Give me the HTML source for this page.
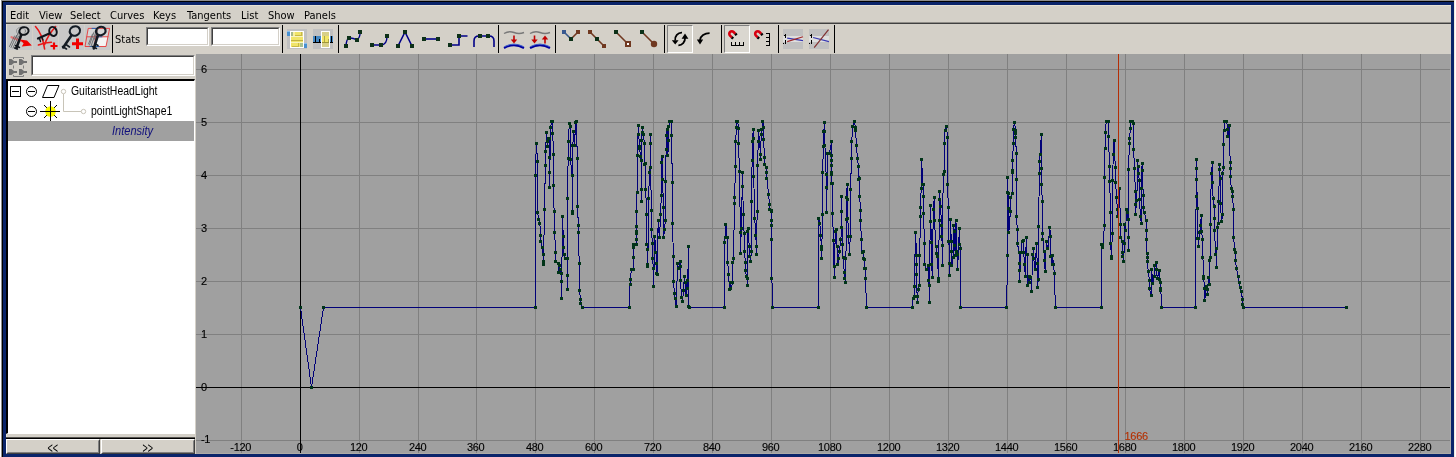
<!DOCTYPE html>
<html lang="en">
<head>
<meta charset="utf-8">
<title>Graph Editor</title>
<style>
html,body{margin:0;padding:0}
body{width:1456px;height:457px;overflow:hidden;position:relative;background:#fff;
 font-family:"DejaVu Sans Condensed","DejaVu Sans","Liberation Sans",sans-serif;font-size:11px;color:#000}
div,span,svg{position:absolute;display:block}
#root{left:0;top:0;width:1456px;height:457px;will-change:transform}
#f1{left:1px;top:0;width:1453px;height:457px;background:#8e8e8e}
#f2{left:2px;top:1px;width:1452px;height:456px;background:#000}
#f3{left:3px;top:2px;width:1451px;height:455px;background:#0a246a}
#f4{left:6px;top:5px;width:1445px;height:449px;background:#e6e1d4}
#f5{left:7px;top:6px;width:1444px;height:448px;background:#d4d0c8}
#ge{left:196px;top:54px;width:1255px;height:400px;background:#aeaba6}
#fr{left:1454px;top:0;width:1px;height:457px;background:#f0ece0}
/* menu */
.menu span{top:9px;height:14px;line-height:14px;white-space:nowrap;font-size:11px}
#msep{left:6px;top:23px;width:1445px;height:1px;background:#404040}
#msep2{left:6px;top:22px;width:1445px;height:1px;background:#908d88}
/* toolbar */
.vsep{top:25px;width:1px;height:28px;background:#000}
.edit{background:#fff;box-sizing:border-box;border:1px solid;border-color:#808080 #fff #fff #808080}
.edit:before{content:"";position:absolute;left:0;top:0;right:0;bottom:0;border:1px solid;border-color:#404040 #d4d0c8 #d4d0c8 #404040}
.pressed{background:#dad7d0;box-sizing:border-box;border:1px solid;border-color:#808080 #fff #fff #808080}
#stats{left:115px;top:33px;height:14px;line-height:14px;font-size:11px}
#tb{left:0;top:24px}
/* outliner */
#tree{left:6px;top:79px;width:189px;height:355px;background:#fff;box-sizing:border-box;border:solid;border-width:2px 1px 1px 2px;border-color:#000 #fff #fff #000}
.row{left:0;width:186px;height:20px}
.row span{font-family:"Liberation Sans",sans-serif;font-size:12px;line-height:14px;top:3px;white-space:nowrap;transform:scaleX(.87);transform-origin:0 0}
#sel{background:#a0a0a0}
#hl{left:6px;top:437px;width:189px;height:2px;background:#000;border-top:1px solid #55534f;box-sizing:border-box}
.btn{top:439px;height:15px;box-sizing:border-box;border:1px solid;border-color:#fff #404040 #404040 #fff;background:#d4d0c8;
 text-align:center;font-size:11px;line-height:11px}
.btn:before{content:"";position:absolute;left:0;top:0;right:0;bottom:0;border:1px solid;border-color:#d4d0c8 #808080 #808080 #d4d0c8}
.btn b{font-weight:normal;position:relative;display:inline-block;top:-.5px;font-family:"Liberation Sans",sans-serif;font-size:15px;line-height:15px;transform:scaleX(.6)}
/* graph */
.graph{left:196px;top:54px}
.lbl text,.tl{font-family:"Liberation Sans",sans-serif;font-size:11px;fill:#000;stroke:#000;stroke-width:.12px}
.tl{fill:#b43000;stroke:#b43000;letter-spacing:-.3px}
.lbl text{letter-spacing:-.3px}
.crv{fill:none;stroke:#000078;stroke-width:1;shape-rendering:crispEdges}
.mk{fill:#003418;shape-rendering:crispEdges}
</style>
</head>
<body>
<div id="root">
<div id="f1"></div><div id="f2"></div><div id="f3"></div><div id="fr"></div><div id="f4"></div><div id="f5"></div><div id="ge"></div>

<div class="menu">
<span style="left:10px">Edit</span>
<span style="left:39px">View</span>
<span style="left:70px">Select</span>
<span style="left:110px">Curves</span>
<span style="left:153px">Keys</span>
<span style="left:187px">Tangents</span>
<span style="left:241px">List</span>
<span style="left:268px">Show</span>
<span style="left:304px">Panels</span>
</div>
<div id="msep2"></div><div id="msep"></div>

<!-- toolbar -->
<div class="vsep" style="left:112px"></div>
<span id="stats">Stats</span>
<div class="edit" style="left:146px;top:27px;width:63px;height:19px"></div>
<div class="edit" style="left:211px;top:27px;width:69px;height:19px"></div>
<div class="vsep" style="left:282px"></div>
<div class="vsep" style="left:338px"></div>
<div class="vsep" style="left:498px"></div>
<div class="vsep" style="left:555px"></div>
<div class="vsep" style="left:664px"></div>
<div class="pressed" style="left:667px;top:25px;width:26px;height:28px"></div>
<div class="vsep" style="left:721px"></div>
<div class="pressed" style="left:724px;top:25px;width:26px;height:28px"></div>
<div class="vsep" style="left:778px"></div>
<div class="vsep" style="left:834px"></div>
<svg id="tb" width="1456" height="30" viewBox="0 24 1456 30">
<!-- key icon backgrounds -->
<g shape-rendering="crispEdges" fill="#c8c8c8">
 <rect x="7" y="25" width="25" height="25"/><rect x="33" y="25" width="25" height="25"/>
 <rect x="59" y="25" width="25" height="25"/><rect x="85" y="25" width="25" height="25"/>
</g>
<!-- icon 1: move key -->
<g fill="none" stroke-linecap="round">
 <path d="M11.5 37.2L21 41" stroke="#f06060" stroke-width="2.2" opacity=".8"/>
 <g stroke="#505458" stroke-width="1">
  <path d="M18.5 36L13 48M16.5 35.5L11 47.500M14.500 36L9.500 46.500M20 29L16 38" opacity=".75"/>
  <ellipse cx="21" cy="31" rx="4.500" ry="3.800" opacity=".45"/>
 </g>
 <ellipse cx="24" cy="31" rx="4.600" ry="3.800" transform="rotate(-15 24 31)" stroke="#10141a" stroke-width="2"/>
 <path d="M21.300 34.800L16.400 48" stroke="#10141a" stroke-width="2.600"/>
 <path d="M15.500 45.500L19.500 47.500M14.500 48L17.500 49" stroke="#10141a" stroke-width="1.400"/>
 <path d="M19.800 39.600L27 40.400L31.800 45.600L21.800 46.400L23.600 43.400z" fill="#f00000" stroke="none"/>
</g>
<!-- icon 2: insert key -->
<g fill="none" stroke-linecap="round">
 <path d="M35.5 26.5Q42.5 34 44.6 49" stroke="#e81818" stroke-width="1.6"/>
 <path d="M55.6 26.6Q47.5 36 44.6 44.5" stroke="#e81818" stroke-width="1.6"/>
 <path d="M38.4 45Q45 42.4 51.4 42.2" stroke="#e81818" stroke-width="1.6"/>
 <ellipse cx="53" cy="31.4" rx="3.6" ry="4.6" transform="rotate(-20 53 31.4)" stroke="#10141a" stroke-width="2"/>
 <path d="M49.3 33.4L38 38.6" stroke="#10141a" stroke-width="2.2"/>
 <path d="M39.5 38.5L40.5 41.5M42 37.5L43 40" stroke="#10141a" stroke-width="1.4"/>
 <path d="M50.5 46H57.5M54 42.5V49.5" stroke="#f00000" stroke-width="2.2" stroke-linecap="butt"/>
</g>
<!-- icon 3: add key -->
<g fill="none" stroke-linecap="round">
 <ellipse cx="74.9" cy="31" rx="5.2" ry="4.6" transform="rotate(-25 74.9 31)" stroke="#141c24" stroke-width="2.2"/>
 <path d="M71.4 35.4L63.2 47.4" stroke="#141c24" stroke-width="2.6"/>
 <path d="M62.5 46.5L66.5 49M66 44.5L69.5 47" stroke="#141c24" stroke-width="1.6"/>
 <path d="M72 43.7H83M77.5 38.5V49" stroke="#f00000" stroke-width="3" stroke-linecap="butt"/>
</g>
<!-- icon 4: lattice deform keys -->
<g fill="none" stroke-linecap="round">
 <path d="M88.6 28.4H109.6L107.9 36.8H87z" fill="#d6d6d6" stroke="none"/>
 <path d="M95.9 36.8H107.9L106 46.5H94.2z" fill="#f4f4f4" stroke="none"/>
 <path d="M88.6 28.4H109.6L106 46.5H85.4zM87 36.8H107.9M97.4 28.4L94.2 46.5" stroke="#e83838" stroke-width=".9"/>
 <path d="M90 46.5H99M92 28.4H98M96 36.8H102" stroke="#2868b8" stroke-width="1"/>
 <g stroke="#5c6064" stroke-width="1" opacity=".8"><path d="M96 31L91 46.500M94 32L89.500 45M98 29L94 40M92.500 34L88.500 44"/></g>
 <ellipse cx="100.8" cy="31" rx="4.8" ry="4.2" transform="rotate(-15 100.8 31)" stroke="#141c24" stroke-width="2.2"/>
 <path d="M98 35L93.8 48.4" stroke="#141c24" stroke-width="2.6"/>
 <path d="M92.5 46.5L96.5 48.5M95.5 44L98 45.5" stroke="#141c24" stroke-width="1.5"/>
</g>
<!-- icon A -->
<g shape-rendering="crispEdges">
 <rect x="287" y="29" width="20" height="20" fill="#c0c0c0"/>
 <rect x="290" y="31" width="14" height="17" fill="#fff"/>
 <rect x="291" y="32" width="12" height="15" fill="#f0e468"/>
 <rect x="291" y="32" width="2" height="4" fill="#a8b888"/>
 <rect x="293" y="32" width="2" height="4" fill="#f8f0a0"/>
 <rect x="295" y="35" width="7" height="1" fill="#c8b848"/><rect x="301" y="32" width="1" height="4" fill="#c8b848"/>
 <rect x="302" y="32" width="1" height="4" fill="#e0d888"/>
 <rect x="291" y="36" width="12" height="1" fill="#f8f4c0"/>
 <rect x="291" y="40" width="12" height="1" fill="#c0b040"/>
 <rect x="291" y="42" width="12" height="1" fill="#f8f4c0"/>
 <rect x="292" y="46" width="7" height="1" fill="#c8b848"/><rect x="298" y="43" width="1" height="4" fill="#c8b848"/>
 <rect x="300" y="43" width="3" height="4" fill="#a8c090"/>
 <rect x="287" y="31" width="3" height="5" fill="#4890d0"/><rect x="287" y="31" width="3" height="1" fill="#88c0f0"/>
 <rect x="304" y="43" width="3" height="5" fill="#4890d0"/><rect x="304" y="43" width="3" height="1" fill="#88c0f0"/>
</g>
<!-- icon B -->
<g shape-rendering="crispEdges">
 <rect x="313" y="29" width="20" height="20" fill="#c0c0c0"/>
 <rect x="313" y="36" width="20" height="6" fill="#4488c4"/>
 <rect x="313" y="42" width="20" height="1" fill="#000"/>
 <rect x="315" y="36" width="1" height="6" fill="#000"/><rect x="319" y="39" width="1" height="3" fill="#000"/>
 <rect x="331" y="36" width="1" height="6" fill="#000"/>
 <rect x="321" y="31" width="9" height="17" fill="#fff"/>
 <rect x="322" y="32" width="7" height="15" fill="#d8d088"/>
 <rect x="322" y="36" width="7" height="6" fill="#f0e468"/>
 <rect x="322" y="42" width="7" height="1" fill="#a09838"/>
 <rect x="324" y="36" width="1" height="6" fill="#b0a848"/><rect x="328" y="39" width="1" height="3" fill="#b0a848"/>
</g>
<!-- tangent icons -->
<g fill="none" stroke="#000088" stroke-width="1.4">
 <path d="M346 46Q346.5 39 349 38.2T357 39.8Q360 38 360.2 32"/>
 <path d="M372 45H381Q387 45 387 36"/>
 <path d="M398 46L405 32L412 46" stroke-width="1.6"/>
 <path d="M424 39H438" stroke-width="1.6"/>
 <path d="M450 45H459V36H467.5" stroke-width="1.6"/>
 <path d="M474 47V41Q474 36 479 36H489Q494 36 494 41V47" stroke-width="1.6"/>
</g>
<g fill="#0c3018" shape-rendering="crispEdges"><rect x="344" y="44" width="4" height="4"/><rect x="347" y="36" width="4" height="4"/><rect x="355" y="38" width="4" height="4"/><rect x="358" y="30" width="4" height="4"/></g>
<g fill="#0c3018" shape-rendering="crispEdges"><rect x="370" y="43" width="4" height="4"/><rect x="379" y="43" width="4" height="4"/><rect x="385" y="34" width="4" height="4"/></g>
<g fill="#0c3018" shape-rendering="crispEdges"><rect x="396" y="44" width="4" height="4"/><rect x="403" y="30" width="4" height="4"/><rect x="410" y="44" width="4" height="4"/></g>
<g fill="#0c3018" shape-rendering="crispEdges"><rect x="422" y="37" width="4" height="4"/><rect x="436" y="37" width="4" height="4"/></g>
<g fill="#0c3018" shape-rendering="crispEdges"><rect x="448" y="43" width="4" height="4"/><rect x="457" y="34" width="4" height="4"/></g>
<g fill="#0c3018" shape-rendering="crispEdges"><rect x="478" y="34" width="4" height="4"/><rect x="486" y="34" width="4" height="4"/></g>
<!-- buffer curve icons -->
<g fill="none">
 <path d="M504 33.5Q509 30.5 514 32.5T524 32.5" stroke="#787878" stroke-width="1.4"/>
 <path d="M504 48Q514 42.5 524 48" stroke="#0000a0" stroke-width="2"/>
 <path d="M504.5 46.6Q514 41.6 523.5 46.6" stroke="#3858c8" stroke-width="1"/>
 <path d="M514 35.5V41" stroke="#c00000" stroke-width="1.6"/><path d="M510.8 39.5H517.2L514 43.6z" fill="#c00000"/>
 <path d="M530 33.5Q535 30.5 540 32.5T550 32.5" stroke="#787878" stroke-width="1.4"/>
 <path d="M530 48Q540 42.5 550 48" stroke="#0000a0" stroke-width="2"/>
 <path d="M530.5 46.6Q540 41.6 549.5 46.6" stroke="#3858c8" stroke-width="1"/>
 <path d="M534.5 35.5V41" stroke="#c00000" stroke-width="1.6"/><path d="M531.3 39.5H537.7L534.5 43.6z" fill="#c00000"/>
 <path d="M545 38V43.6" stroke="#c00000" stroke-width="1.6"/><path d="M541.8 39.6H548.2L545 35.4z" fill="#c00000"/>
</g>
<!-- tangent handle icons -->
<g fill="none" stroke-width="1.6">
 <path d="M564 32L571 39" stroke="#385888"/><path d="M571 39L578 32" stroke="#703820"/>
 <path d="M590 32L604 46" stroke="#703820"/>
 <path d="M616 32L627 43" stroke="#703820"/>
 <path d="M642 32L653 43" stroke="#703820"/>
</g>
<g shape-rendering="crispEdges">
 <rect x="562" y="30" width="4" height="4" fill="#385890"/><rect x="576" y="30" width="4" height="4" fill="#703820"/>
 <rect x="588" y="30" width="4" height="4" fill="#703820"/><rect x="602" y="44" width="4" height="4" fill="#703820"/>
 <rect x="625" y="41" width="6" height="6" fill="#703820"/><rect x="627" y="43" width="2" height="2" fill="#fff"/>
</g>
<circle cx="654" cy="44" r="3.2" fill="#703820"/>
<g fill="#0c3018" shape-rendering="crispEdges"><rect x="569" y="37" width="4" height="4"/><rect x="595" y="37" width="4" height="4"/><rect x="614" y="30" width="4" height="4"/><rect x="640" y="30" width="4" height="4"/></g>
<!-- cycle icons -->
<g fill="none" stroke="#000" stroke-width="1.8">
 <path d="M682 32.7A6.6 6.8 0 0 0 675.2 40.5"/>
 <path d="M678.4 45.3A6.6 6.8 0 0 0 685 38"/>
 <path d="M709.6 33.1A9.6 7.5 0 0 0 700 40"/>
</g>
<path d="M671.8 40.2H678.6L675.2 44.6zM681.6 38.8H688.4L685 33.6zM696.8 39.4H703.2L700 44.4z" fill="#000"/>
<!-- magnet icons -->
<g fill="none" stroke-width="2.6" transform="translate(731.8 33.8) rotate(45)">
 <path d="M2.6 -2.5H0A2.5 2.5 0 0 0 0 2.5H2.6" stroke="#d80010"/><path d="M2.4 -2.5H4.4M2.4 2.5H4.4" stroke="#000"/>
</g>
<g fill="none" stroke-width="2.6" transform="translate(757.7 33.8) rotate(45)">
 <path d="M2.6 -2.5H0A2.5 2.5 0 0 0 0 2.5H2.6" stroke="#d80010"/><path d="M2.4 -2.5H4.4M2.4 2.5H4.4" stroke="#000"/>
</g>
<g shape-rendering="crispEdges" fill="#000">
 <rect x="731" y="45" width="13" height="1"/><rect x="731" y="42" width="1" height="3"/><rect x="735" y="42" width="1" height="3"/><rect x="739" y="42" width="1" height="3"/><rect x="743" y="42" width="1" height="3"/>
 <rect x="769" y="33" width="1" height="13"/><rect x="766" y="33" width="3" height="1"/><rect x="766" y="37" width="3" height="1"/><rect x="766" y="41" width="3" height="1"/><rect x="766" y="45" width="3" height="1"/>
</g>
<!-- normalize icons -->
<g shape-rendering="crispEdges">
 <rect x="783" y="29" width="20" height="20" fill="#c0c0c0"/><rect x="783" y="36" width="20" height="6" fill="#dedede"/>
 <rect x="809" y="29" width="20" height="20" fill="#c0c0c0"/><rect x="809" y="36" width="20" height="6" fill="#dedede"/>
 <rect x="785" y="34" width="1" height="4" fill="#000"/><rect x="784" y="35" width="1" height="1" fill="#000"/>
 <rect x="785" y="40" width="1" height="4" fill="#000"/><rect x="783" y="43" width="1" height="1" fill="#000"/>
 <rect x="811" y="34" width="1" height="4" fill="#000"/><rect x="810" y="35" width="1" height="1" fill="#000"/>
 <rect x="811" y="40" width="1" height="4" fill="#000"/><rect x="809" y="43" width="1" height="1" fill="#000"/>
</g>
<g fill="none" stroke-width="1.2">
 <path d="M787.2 38.2L803 40.6" stroke="#3838b0"/><path d="M787.2 41.6L803 36.7" stroke="#a02828"/>
 <path d="M813.1 37.5L829 41.6" stroke="#3838b0"/><path d="M814.2 47.6L828.5 29.7" stroke="#803030"/>
</g>
</svg>


<!-- outliner -->
<div class="edit" style="left:31px;top:55px;width:164px;height:21px"></div>
<div id="tree">
 <div class="row" style="top:0"><span style="left:63px">GuitaristHeadLight</span></div>
 <div class="row" style="top:20px"><span style="left:83px">pointLightShape1</span></div>
 <div class="row" id="sel" style="top:40px"><span style="left:104px;font-style:italic;color:#10107c;transform:scaleX(.92)">Intensity</span></div>
</div>
<svg id="li" width="190" height="70" viewBox="6 54 190 70" style="left:6px;top:54px">
<!-- filter icon -->
<g fill="#707070">
 <path d="M9 59h2.5l2.5 2h3v2h-3l-2.5 2H9z"/><path d="M19 59h2.5l2.5 2h3v2h-3l-2.5 2H19z"/>
 <path d="M9 69h2.5l2.5 2h3v2h-3l-2.5 2H9z"/><path d="M19 69h2.5l2.5 2h3v2h-3l-2.5 2H19z"/>
</g>
<path d="M13.5 59V57.5H23.5V59M13.5 75V76.500H23.5V75M13.500 65.500V68.500M23.500 65.500V68.500" fill="none" stroke="#808080" stroke-width="1"/>
<!-- tree icons -->
<g fill="none" stroke="#000" stroke-width="1">
 <rect x="10.500" y="86.500" width="10" height="10"/><path d="M12 91.500H19"/>
 <circle cx="31.500" cy="91.500" r="5"/><path d="M28 91.500H35"/>
 <path d="M42.500 97.500L54 97.500L59 85.500L47.500 85.500z"/>
 <circle cx="31.500" cy="111.500" r="5"/><path d="M28 111.500H35"/>
</g>
<g fill="none" stroke="#c8c4b8" stroke-width="1">
 <circle cx="63.500" cy="91.500" r="2.200" fill="#fff"/><path d="M63.500 94V111.500H81"/><circle cx="83.500" cy="111.500" r="2.200" fill="#fff"/>
</g>
<path d="M44 105L57 118M57 105L44 118" stroke="#000" stroke-width="1" fill="none"/>
<circle cx="50.500" cy="111.500" r="5.3" fill="#f8f800"/>
<path d="M50.500 101V121M40 111.500H60" stroke="#000" stroke-width="1" fill="none" shape-rendering="crispEdges"/>
</svg>

<div id="hl"></div>
<div class="btn" style="left:6px;width:94px"><b>&lt;&lt;</b></div>
<div class="btn" style="left:101px;width:94px"><b>&gt;&gt;</b></div>

<svg class="graph" width="1254" height="399" viewBox="196 54 1254 399">
<rect x="196" y="54" width="1254" height="399" fill="#a0a0a0"/>
<rect x="241" y="54" width="1" height="399" fill="#808080"/>
<rect x="359" y="54" width="1" height="399" fill="#808080"/>
<rect x="418" y="54" width="1" height="399" fill="#808080"/>
<rect x="476" y="54" width="1" height="399" fill="#808080"/>
<rect x="535" y="54" width="1" height="399" fill="#808080"/>
<rect x="594" y="54" width="1" height="399" fill="#808080"/>
<rect x="653" y="54" width="1" height="399" fill="#808080"/>
<rect x="712" y="54" width="1" height="399" fill="#808080"/>
<rect x="771" y="54" width="1" height="399" fill="#808080"/>
<rect x="830" y="54" width="1" height="399" fill="#808080"/>
<rect x="889" y="54" width="1" height="399" fill="#808080"/>
<rect x="948" y="54" width="1" height="399" fill="#808080"/>
<rect x="1007" y="54" width="1" height="399" fill="#808080"/>
<rect x="1066" y="54" width="1" height="399" fill="#808080"/>
<rect x="1125" y="54" width="1" height="399" fill="#808080"/>
<rect x="1184" y="54" width="1" height="399" fill="#808080"/>
<rect x="1243" y="54" width="1" height="399" fill="#808080"/>
<rect x="1302" y="54" width="1" height="399" fill="#808080"/>
<rect x="1361" y="54" width="1" height="399" fill="#808080"/>
<rect x="1420" y="54" width="1" height="399" fill="#808080"/>
<rect x="196" y="440" width="1254" height="1" fill="#808080"/>
<rect x="196" y="334" width="1254" height="1" fill="#808080"/>
<rect x="196" y="281" width="1254" height="1" fill="#808080"/>
<rect x="196" y="228" width="1254" height="1" fill="#808080"/>
<rect x="196" y="175" width="1254" height="1" fill="#808080"/>
<rect x="196" y="122" width="1254" height="1" fill="#808080"/>
<rect x="196" y="69" width="1254" height="1" fill="#808080"/>
<rect x="196" y="387" width="1254" height="1" fill="#000"/>
<rect x="300" y="54" width="1" height="399" fill="#000"/>
<g class="lbl">
<text x="201" y="443">-1</text>
<text x="201" y="391">0</text>
<text x="201" y="338">1</text>
<text x="201" y="285">2</text>
<text x="201" y="232">3</text>
<text x="201" y="179">4</text>
<text x="201" y="126">5</text>
<text x="201" y="73">6</text>
<text x="240.7" y="451" text-anchor="middle">-120</text>
<text x="299.7" y="451" text-anchor="middle">0</text>
<text x="358.7" y="451" text-anchor="middle">120</text>
<text x="417.7" y="451" text-anchor="middle">240</text>
<text x="475.7" y="451" text-anchor="middle">360</text>
<text x="534.7" y="451" text-anchor="middle">480</text>
<text x="593.7" y="451" text-anchor="middle">600</text>
<text x="652.7" y="451" text-anchor="middle">720</text>
<text x="711.7" y="451" text-anchor="middle">840</text>
<text x="770.7" y="451" text-anchor="middle">960</text>
<text x="829.7" y="451" text-anchor="middle">1080</text>
<text x="888.7" y="451" text-anchor="middle">1200</text>
<text x="947.7" y="451" text-anchor="middle">1320</text>
<text x="1006.7" y="451" text-anchor="middle">1440</text>
<text x="1065.7" y="451" text-anchor="middle">1560</text>
<text x="1124.7" y="451" text-anchor="middle">1680</text>
<text x="1183.7" y="451" text-anchor="middle">1800</text>
<text x="1242.7" y="451" text-anchor="middle">1920</text>
<text x="1301.7" y="451" text-anchor="middle">2040</text>
<text x="1360.7" y="451" text-anchor="middle">2160</text>
<text x="1419.7" y="451" text-anchor="middle">2280</text>
</g>
<polyline class="crv" points="300.5,307.5 311.5,387.5 323.5,307.5 535.2,307.5 535.2,175.3 536.4,143.2 537.5,161.4 537.5,212.3 538.7,219.1 539.8,223.7 540.9,235.5 540.9,241.9 542.1,247.6 543.2,254.4 543.7,261.2 543.7,264.6 544.3,209.4 545.5,165.5 545.5,151.1 546.6,132.5 547.1,141.6 547.8,146.1 548.4,138.2 549.6,138.2 549.6,157.5 549.6,172.3 549.6,187.1 550.5,127.9 551.6,121.5 552.3,121.5 552.8,133.2 553.4,154.1 553.4,185.3 554.1,211 554.6,232.1 555.7,252.1 555.7,261.2 558,263.5 558,272.6 559.1,265.8 560.3,269.6 561.4,273.7 561.4,281.7 561.4,298.3 562.6,216.8 563.2,236.2 563.2,247.6 563.7,247.6 564.1,254.4 565.5,258.9 567.1,258.9 567.1,275.3 567.1,289.2 567.3,198.5 568.2,158.7 568.2,141.1 569.4,123.4 570.5,126.8 570.5,159.8 572.1,175.3 572.1,211 572.1,213.4 572.8,145 573.9,131.3 574.6,145 575.5,122.2 576.4,121.5 577.3,158.7 577.3,206 578.5,225.5 578.5,232.8 579.2,263.5 579.2,290.1 580.8,299.9 580.8,303.3 582.4,307.5 629.2,307.5 630.1,284 630.1,279.4 631.5,269.6 633.1,269.6 633.1,257.8 633.1,247.6 633.1,244.1 634.2,244.1 636.5,244.1 636.5,239.6 636.5,231.6 636.5,233.9 636.5,226.4 636.5,211.1 636.5,211 637,192.1 637,155.2 638.1,134.8 638.1,125.7 639.5,146.1 639.5,148.4 640.6,156.4 641.5,160.9 641.5,189.4 641.5,201.9 641.5,140.4 642.2,127.5 642.9,132.5 643.3,134.8 644.5,143.9 644.5,164.3 645.6,163.2 645.6,189.4 646.8,214.4 646.8,214.6 646.8,244.1 647.9,249.8 647.9,264.6 647.9,266.9 648.4,198.9 649.7,172.3 650.2,167.8 650.2,143.9 650.2,134.1 651.3,210.3 651.3,229.3 652.4,243 652.4,258.9 653.6,268 653.6,286.2 654.7,236.2 655.9,252.1 656.5,263.5 656.5,273.7 657.5,274.9 658.1,220.2 659.3,237.3 660.9,214.6 660.9,214.4 661.1,195.1 661.5,162.1 662.2,156.4 662.2,179.1 663.8,207.1 663.8,237.3 664.3,229.3 665.6,220.2 665.6,181.4 666.1,149.6 666.1,135.9 667.2,129.1 667.9,155.2 668.4,140.4 668.8,126.8 669.5,121.5 671.1,121.5 671.3,135.9 672.5,182.6 672.5,223.2 673.4,256.7 673.4,281.7 674.5,293.1 675.2,298.8 676.3,306.7 677.5,263.9 678.6,268 680.4,261.7 680.4,266.9 680.4,280.6 681.6,297.6 682.5,301 683.6,290.8 684.3,276 685,282.8 686.1,295.3 687,280.6 687.7,288.5 688.4,246.4 688.4,306.7 689.3,307.5 724.3,307.5 724.3,242.3 725.5,237.3 725.9,224.8 727.1,237.3 727.8,262.8 728.7,274.2 729.3,289.7 730.9,282.8 730.9,288.5 732.8,282.4 732.8,262.8 733.4,258.9 734.6,203 734.6,197.3 735.5,166.2 735.5,141.6 736.6,127.9 736.6,121.5 737.8,121.5 738.4,128.4 738.4,143.9 739.6,171.2 740.3,232.8 740.3,253.2 741.4,228.2 742.5,172.3 742.5,186 743.5,214.1 744.1,233.9 744.6,251.4 745.3,262.3 745.3,270.3 746.4,276 747.6,278.3 747.6,285.1 747.6,231.6 748.7,228.2 749.1,246.9 749.8,256.7 750.5,261.2 751.4,251.4 751.6,201.2 752.1,160.2 752.6,141.6 753.2,129.1 753.7,138.2 753.7,176.9 754.8,218 755.5,235 756.7,246.4 756.7,254.4 757.1,211 757.1,165.5 758.5,141.6 758.5,130.2 760.5,154.1 760.5,159.8 761.2,134.8 761.9,129.1 762.8,121.5 763.5,127.9 763.5,139.3 764.6,157.5 764.6,164.3 766.9,167.8 766.9,172.3 766.9,178 768.5,194.4 769.6,204.2 769.6,209.4 771.4,210.3 771.4,211.1 771.4,220.2 771.4,225.5 771.4,239.1 771.9,278.3 772.6,307.5 818.6,307.5 818.6,218 819.9,223.7 820.4,235 821.5,246.4 821.5,249.8 821.5,258.2 822.7,214.6 822.7,214 822.7,172.3 823.3,146.1 823.8,131.3 824.5,122.9 824.9,131.3 824.9,145 826.1,174.6 826.5,187.1 826.5,212.1 826.5,212.3 827.9,153 829.5,153 831.8,141.1 831.8,155.2 831.8,160.9 831.8,165.5 831.8,172.3 831.8,174.6 831.8,183 832.4,183 832.4,213.3 832.4,213.4 833.6,240.7 834,266.9 834.5,277.1 835.2,231.6 836.3,229.3 837,246.4 837.9,264.6 838.6,258.9 839.3,251 840.9,239.6 841.5,227.1 841.5,196.2 841.5,211 842.5,244.1 843.1,257.8 844.3,272.6 844.3,278.3 845.9,282.4 845.9,258.9 846.5,219.1 846.5,197.3 847.2,184.4 847.7,199.6 847.7,218 848.8,236.2 849.3,254.4 850.4,236.2 850.4,189.4 851.6,158.7 851.6,141.6 852.9,126.8 854.1,121.5 855.7,127.9 855.7,130.2 856.3,145 857.5,158.7 858.4,166.2 858.4,179.1 859.1,178 859.5,196.2 860.7,210.3 860.7,220.9 861.3,239.6 862,252.1 863.6,251.4 863.6,258.9 864.8,259.6 864.8,268 865.4,268.7 865.4,278.3 866.6,307.5 912.1,307.5 913.2,298.8 914.3,296.5 914.3,286.2 915.5,232.3 916.6,255.5 916.6,264.6 916.6,274.2 917.1,296.5 917.1,302.2 918.2,289.7 919.4,285.1 919.6,255.5 920.5,216.8 920.5,207.6 921.2,188.2 921.6,159.3 922.8,184.8 923.4,184.4 923.4,196.2 923.4,213.4 924.6,243.7 924.6,264.6 926.4,269.6 928,265.8 928,280.6 929.1,285.1 929.1,302.2 930.3,221.4 930.3,205.3 931.4,242.3 931.4,264.6 932.6,277.8 933.2,209.4 934.4,197.3 934.4,220.2 936,246.4 936,253.2 937.8,256.7 938.2,278.3 938.2,281 939.4,220.2 939.4,199.2 939.4,191.7 940.5,206.4 941.7,225.5 941.7,236.2 942.3,245.3 942.3,265.1 943.2,174.6 944.4,171.2 944.4,143.4 945.1,130.2 946.7,126.3 947.3,137.5 947.3,184.4 948.5,207.6 948.9,241.9 949.6,263.5 949.6,275.3 950.3,219.1 951.4,241.9 951.9,251 951.9,265.8 953,257.8 953,225.5 954.6,231.6 954.6,245.3 955.3,255.5 956,220.9 956.4,251 957.6,254.4 957.6,269.2 959.4,228.7 959.4,244.1 960.5,248.2 960.5,307.5 1006.5,307.5 1007.7,255.5 1007.7,177.5 1007.7,192.1 1008.8,193.9 1008.8,208.7 1008.8,232.3 1010.4,211.5 1010.4,197.3 1012.7,193.9 1012.7,172.3 1012.7,170 1012.7,160.2 1013.3,143.4 1013.3,129.1 1014.5,122.2 1015.6,130.2 1015.6,133.6 1015.6,137.5 1016.3,153 1016.3,179.4 1016.3,216.8 1017.4,229.3 1017.4,243 1019,252.1 1019,263.5 1019,270.3 1019.5,281.2 1020.9,252.1 1022,241.9 1023.6,240.7 1023.6,252.1 1024.7,264.6 1025.2,276 1026.3,237.3 1027,254.4 1027.7,285.1 1029.3,276 1029.3,282.8 1030.9,277.1 1031.5,291.9 1032.7,254.4 1033.8,248.7 1033.8,258.9 1035,269.6 1036.6,243.7 1037.2,263.5 1037.2,287.4 1038.4,279.4 1038.4,226.4 1039.5,173.4 1039.5,161.6 1040.2,154.1 1041.3,134.3 1041.3,168.9 1041.3,184.4 1042.5,201.9 1042.5,233.2 1042.9,239.1 1044.1,251.4 1044.5,260.5 1045.2,271.9 1046.3,241.9 1047.9,248.7 1049.8,227.1 1050.4,236.2 1050.9,256.7 1052,264.6 1052.5,255.5 1053.6,264.6 1054.3,273.3 1055.4,307.5 1101.2,307.5 1101.2,244.1 1102.8,244.1 1102.8,247.6 1104.4,225.9 1104.6,177.5 1105,148.4 1105.5,132.5 1106.2,121.6 1108.4,121.5 1108.4,136.6 1109.6,166.6 1109.6,181.4 1110.7,212.1 1110.7,243.7 1111.4,256.7 1111.4,258.9 1112.3,233.9 1112.3,180.3 1113.5,154.1 1114.1,140.4 1115.3,167.3 1115.7,182.1 1116.4,197.3 1117.6,209.9 1117.6,216.8 1119.4,188.2 1120.5,224.1 1120.5,237.3 1122.1,241.9 1122.8,252.1 1122.8,256.7 1123.7,261.2 1124.4,243 1124.8,224.1 1125.5,230.5 1126.7,209.9 1127.3,212.3 1128.2,219.1 1128.2,237.3 1128.2,250.5 1128.5,169.4 1129.4,143.9 1129.4,138.2 1130.5,128.4 1130.5,121.6 1132.8,121.6 1133.5,123.4 1133.5,149.6 1134.6,168.4 1135.3,191.7 1135.3,204.2 1135.3,214.6 1136.9,200.3 1137.4,160.2 1138,166.6 1138,173.9 1139.6,180.3 1139.6,199.6 1140.3,216.4 1141.4,223.2 1141.4,188.2 1142.1,163.2 1142.1,170 1143.3,195.1 1143.3,207.6 1144.4,212.3 1146,220.2 1146,230.5 1146,239.1 1147.1,253.2 1147.1,257.8 1147.1,261.9 1148.3,271 1149.4,280.6 1149.4,288.5 1151,295.3 1151.7,269.6 1152.8,283.3 1154,276.5 1154.6,265.8 1156.2,262.8 1156.2,269.6 1157.4,278.3 1159.2,270.3 1159.2,279.4 1160.8,282.4 1160.8,290.1 1160.8,288.5 1161.5,307.5 1195.4,307.5 1196.1,196.2 1196.5,159.8 1196.5,168.4 1196.5,179.1 1197.7,208.7 1197.7,238.4 1198.3,238.4 1198.3,246.4 1199.5,232.8 1200.6,225.9 1201.3,215 1201.3,231.6 1202.9,239.1 1202.9,257.3 1203.6,276.5 1203.6,278.3 1204.7,288.5 1204.7,300.6 1206.3,286.2 1207.4,294.2 1207.4,289.7 1208.6,277.8 1209.7,284 1209.7,260.1 1210.4,257.3 1210.4,224.1 1211.3,173.4 1212.5,162.1 1212.5,182.1 1213.1,198.5 1214.3,206.4 1214.3,218 1214.3,230 1215.9,254.4 1216.5,248.7 1216.5,267.4 1217.7,227.1 1218.1,223.2 1218.8,201.9 1219.3,164.8 1219.3,169.4 1220.4,178.5 1220.4,203.5 1221.6,221.4 1222.7,214.6 1222.7,173.4 1223.4,167.3 1223.4,144.3 1224.1,130.2 1224.5,121.6 1226.8,121.5 1227.5,129.1 1227.9,136.6 1229.1,125.2 1230.2,162.5 1230.2,168.9 1230.2,176.4 1231.3,188.2 1232.5,191.7 1232.5,196.7 1233.6,209.4 1233.6,237.3 1234.8,249.8 1235.4,252.1 1235.4,260.5 1236.6,268.7 1238.2,276 1239.3,282.8 1240.4,287.4 1241.1,291.9 1242.7,299.9 1242.7,304.4 1243.4,307.5 1346.5,307.5"/>
<path class="mk" d="M299 306h3v3h-3zM310 386h3v3h-3zM322 306h3v3h-3zM534 306h3v3h-3zM534 174h3v3h-3zM535 142h3v3h-3zM536 160h3v3h-3zM536 211h3v3h-3zM537 218h3v3h-3zM538 222h3v3h-3zM539 234h3v3h-3zM539 240h3v3h-3zM541 246h3v3h-3zM542 253h3v3h-3zM542 260h3v3h-3zM542 263h3v3h-3zM543 208h3v3h-3zM544 164h3v3h-3zM544 150h3v3h-3zM545 131h3v3h-3zM546 140h3v3h-3zM546 145h3v3h-3zM547 137h3v3h-3zM548 137h3v3h-3zM548 156h3v3h-3zM548 171h3v3h-3zM548 186h3v3h-3zM549 126h3v3h-3zM550 120h3v3h-3zM551 120h3v3h-3zM551 132h3v3h-3zM552 153h3v3h-3zM552 184h3v3h-3zM553 210h3v3h-3zM553 231h3v3h-3zM554 251h3v3h-3zM554 260h3v3h-3zM557 262h3v3h-3zM557 271h3v3h-3zM558 264h3v3h-3zM559 268h3v3h-3zM560 272h3v3h-3zM560 280h3v3h-3zM560 297h3v3h-3zM561 215h3v3h-3zM562 235h3v3h-3zM562 246h3v3h-3zM563 253h3v3h-3zM564 257h3v3h-3zM566 257h3v3h-3zM566 274h3v3h-3zM566 288h3v3h-3zM566 197h3v3h-3zM567 157h3v3h-3zM567 140h3v3h-3zM568 122h3v3h-3zM569 125h3v3h-3zM569 158h3v3h-3zM571 174h3v3h-3zM571 210h3v3h-3zM571 212h3v3h-3zM571 144h3v3h-3zM572 130h3v3h-3zM573 144h3v3h-3zM574 121h3v3h-3zM575 120h3v3h-3zM576 157h3v3h-3zM576 205h3v3h-3zM577 224h3v3h-3zM577 231h3v3h-3zM578 262h3v3h-3zM578 289h3v3h-3zM579 298h3v3h-3zM579 302h3v3h-3zM581 306h3v3h-3zM628 306h3v3h-3zM629 283h3v3h-3zM629 278h3v3h-3zM630 268h3v3h-3zM632 268h3v3h-3zM632 256h3v3h-3zM632 246h3v3h-3zM632 243h3v3h-3zM633 243h3v3h-3zM635 243h3v3h-3zM635 238h3v3h-3zM635 230h3v3h-3zM635 232h3v3h-3zM635 225h3v3h-3zM635 210h3v3h-3zM636 191h3v3h-3zM636 154h3v3h-3zM637 133h3v3h-3zM637 124h3v3h-3zM638 145h3v3h-3zM638 147h3v3h-3zM639 155h3v3h-3zM640 159h3v3h-3zM640 188h3v3h-3zM640 200h3v3h-3zM640 139h3v3h-3zM641 126h3v3h-3zM641 131h3v3h-3zM642 133h3v3h-3zM643 142h3v3h-3zM643 163h3v3h-3zM644 162h3v3h-3zM644 188h3v3h-3zM645 213h3v3h-3zM645 243h3v3h-3zM646 248h3v3h-3zM646 263h3v3h-3zM646 265h3v3h-3zM647 197h3v3h-3zM648 171h3v3h-3zM649 166h3v3h-3zM649 142h3v3h-3zM649 133h3v3h-3zM650 209h3v3h-3zM650 228h3v3h-3zM651 242h3v3h-3zM651 257h3v3h-3zM652 267h3v3h-3zM652 285h3v3h-3zM653 235h3v3h-3zM654 251h3v3h-3zM655 262h3v3h-3zM655 272h3v3h-3zM656 273h3v3h-3zM657 219h3v3h-3zM658 236h3v3h-3zM659 213h3v3h-3zM660 194h3v3h-3zM660 161h3v3h-3zM661 155h3v3h-3zM661 178h3v3h-3zM662 206h3v3h-3zM662 236h3v3h-3zM663 228h3v3h-3zM664 219h3v3h-3zM664 180h3v3h-3zM665 148h3v3h-3zM665 134h3v3h-3zM666 128h3v3h-3zM666 154h3v3h-3zM667 139h3v3h-3zM667 125h3v3h-3zM668 120h3v3h-3zM670 120h3v3h-3zM670 134h3v3h-3zM671 181h3v3h-3zM671 222h3v3h-3zM672 255h3v3h-3zM672 280h3v3h-3zM673 292h3v3h-3zM674 297h3v3h-3zM675 305h3v3h-3zM676 262h3v3h-3zM677 267h3v3h-3zM679 260h3v3h-3zM679 265h3v3h-3zM679 279h3v3h-3zM680 296h3v3h-3zM681 300h3v3h-3zM682 289h3v3h-3zM683 275h3v3h-3zM684 281h3v3h-3zM685 294h3v3h-3zM686 279h3v3h-3zM686 287h3v3h-3zM687 245h3v3h-3zM687 305h3v3h-3zM688 306h3v3h-3zM723 306h3v3h-3zM723 241h3v3h-3zM724 236h3v3h-3zM724 223h3v3h-3zM726 236h3v3h-3zM726 261h3v3h-3zM727 273h3v3h-3zM728 288h3v3h-3zM729 281h3v3h-3zM729 287h3v3h-3zM731 281h3v3h-3zM731 261h3v3h-3zM732 257h3v3h-3zM733 202h3v3h-3zM733 196h3v3h-3zM734 165h3v3h-3zM734 140h3v3h-3zM735 126h3v3h-3zM735 120h3v3h-3zM736 120h3v3h-3zM737 127h3v3h-3zM737 142h3v3h-3zM738 170h3v3h-3zM739 231h3v3h-3zM739 252h3v3h-3zM740 227h3v3h-3zM741 171h3v3h-3zM741 185h3v3h-3zM742 213h3v3h-3zM743 232h3v3h-3zM743 250h3v3h-3zM744 261h3v3h-3zM744 269h3v3h-3zM745 275h3v3h-3zM746 277h3v3h-3zM746 284h3v3h-3zM746 230h3v3h-3zM747 227h3v3h-3zM748 245h3v3h-3zM748 255h3v3h-3zM749 260h3v3h-3zM750 250h3v3h-3zM750 200h3v3h-3zM751 159h3v3h-3zM751 140h3v3h-3zM752 128h3v3h-3zM752 137h3v3h-3zM752 175h3v3h-3zM753 217h3v3h-3zM754 234h3v3h-3zM755 245h3v3h-3zM755 253h3v3h-3zM756 210h3v3h-3zM756 164h3v3h-3zM757 140h3v3h-3zM757 129h3v3h-3zM759 153h3v3h-3zM759 158h3v3h-3zM760 133h3v3h-3zM760 128h3v3h-3zM761 120h3v3h-3zM762 126h3v3h-3zM762 138h3v3h-3zM763 156h3v3h-3zM763 163h3v3h-3zM765 166h3v3h-3zM765 171h3v3h-3zM765 177h3v3h-3zM767 193h3v3h-3zM768 203h3v3h-3zM768 208h3v3h-3zM770 209h3v3h-3zM770 210h3v3h-3zM770 219h3v3h-3zM770 224h3v3h-3zM770 238h3v3h-3zM770 277h3v3h-3zM771 306h3v3h-3zM817 306h3v3h-3zM817 217h3v3h-3zM818 222h3v3h-3zM819 234h3v3h-3zM820 245h3v3h-3zM820 248h3v3h-3zM820 257h3v3h-3zM821 213h3v3h-3zM821 171h3v3h-3zM822 145h3v3h-3zM822 130h3v3h-3zM823 121h3v3h-3zM823 130h3v3h-3zM823 144h3v3h-3zM825 173h3v3h-3zM825 186h3v3h-3zM825 211h3v3h-3zM826 152h3v3h-3zM828 152h3v3h-3zM830 140h3v3h-3zM830 154h3v3h-3zM830 159h3v3h-3zM830 164h3v3h-3zM830 171h3v3h-3zM830 173h3v3h-3zM830 182h3v3h-3zM831 182h3v3h-3zM831 212h3v3h-3zM832 239h3v3h-3zM833 265h3v3h-3zM833 276h3v3h-3zM834 230h3v3h-3zM835 228h3v3h-3zM836 245h3v3h-3zM836 263h3v3h-3zM837 257h3v3h-3zM838 250h3v3h-3zM839 238h3v3h-3zM840 226h3v3h-3zM840 195h3v3h-3zM840 210h3v3h-3zM841 243h3v3h-3zM842 256h3v3h-3zM843 271h3v3h-3zM843 277h3v3h-3zM844 281h3v3h-3zM844 257h3v3h-3zM845 218h3v3h-3zM845 196h3v3h-3zM846 183h3v3h-3zM846 198h3v3h-3zM846 217h3v3h-3zM847 235h3v3h-3zM848 253h3v3h-3zM849 235h3v3h-3zM849 188h3v3h-3zM850 157h3v3h-3zM850 140h3v3h-3zM851 125h3v3h-3zM853 120h3v3h-3zM854 126h3v3h-3zM854 129h3v3h-3zM855 144h3v3h-3zM856 157h3v3h-3zM857 165h3v3h-3zM857 178h3v3h-3zM858 177h3v3h-3zM858 195h3v3h-3zM859 209h3v3h-3zM859 219h3v3h-3zM860 238h3v3h-3zM861 251h3v3h-3zM862 250h3v3h-3zM862 257h3v3h-3zM863 258h3v3h-3zM863 267h3v3h-3zM864 267h3v3h-3zM864 277h3v3h-3zM865 306h3v3h-3zM911 306h3v3h-3zM912 297h3v3h-3zM913 295h3v3h-3zM913 285h3v3h-3zM914 231h3v3h-3zM915 254h3v3h-3zM915 263h3v3h-3zM915 273h3v3h-3zM916 295h3v3h-3zM916 301h3v3h-3zM917 288h3v3h-3zM918 284h3v3h-3zM918 254h3v3h-3zM919 215h3v3h-3zM919 206h3v3h-3zM920 187h3v3h-3zM920 158h3v3h-3zM921 183h3v3h-3zM922 183h3v3h-3zM922 195h3v3h-3zM922 212h3v3h-3zM923 242h3v3h-3zM923 263h3v3h-3zM925 268h3v3h-3zM927 264h3v3h-3zM927 279h3v3h-3zM928 284h3v3h-3zM928 301h3v3h-3zM929 220h3v3h-3zM929 204h3v3h-3zM930 241h3v3h-3zM930 263h3v3h-3zM931 276h3v3h-3zM932 208h3v3h-3zM933 196h3v3h-3zM933 219h3v3h-3zM935 245h3v3h-3zM935 252h3v3h-3zM936 255h3v3h-3zM937 277h3v3h-3zM937 280h3v3h-3zM938 219h3v3h-3zM938 198h3v3h-3zM938 190h3v3h-3zM939 205h3v3h-3zM940 224h3v3h-3zM940 235h3v3h-3zM941 244h3v3h-3zM941 264h3v3h-3zM942 173h3v3h-3zM943 170h3v3h-3zM943 142h3v3h-3zM944 129h3v3h-3zM945 125h3v3h-3zM946 136h3v3h-3zM946 183h3v3h-3zM947 206h3v3h-3zM947 240h3v3h-3zM948 262h3v3h-3zM948 274h3v3h-3zM949 218h3v3h-3zM950 240h3v3h-3zM950 250h3v3h-3zM950 264h3v3h-3zM952 256h3v3h-3zM952 224h3v3h-3zM953 230h3v3h-3zM953 244h3v3h-3zM954 254h3v3h-3zM955 219h3v3h-3zM955 250h3v3h-3zM956 253h3v3h-3zM956 268h3v3h-3zM958 227h3v3h-3zM958 243h3v3h-3zM959 247h3v3h-3zM959 306h3v3h-3zM1005 306h3v3h-3zM1006 254h3v3h-3zM1006 176h3v3h-3zM1006 191h3v3h-3zM1007 192h3v3h-3zM1007 207h3v3h-3zM1007 231h3v3h-3zM1009 210h3v3h-3zM1009 196h3v3h-3zM1011 192h3v3h-3zM1011 171h3v3h-3zM1011 169h3v3h-3zM1011 159h3v3h-3zM1012 142h3v3h-3zM1012 128h3v3h-3zM1013 121h3v3h-3zM1014 129h3v3h-3zM1014 132h3v3h-3zM1014 136h3v3h-3zM1015 152h3v3h-3zM1015 178h3v3h-3zM1015 215h3v3h-3zM1016 228h3v3h-3zM1016 242h3v3h-3zM1018 251h3v3h-3zM1018 262h3v3h-3zM1018 269h3v3h-3zM1018 280h3v3h-3zM1019 251h3v3h-3zM1021 240h3v3h-3zM1022 239h3v3h-3zM1022 251h3v3h-3zM1023 263h3v3h-3zM1024 275h3v3h-3zM1025 236h3v3h-3zM1026 253h3v3h-3zM1026 284h3v3h-3zM1028 275h3v3h-3zM1028 281h3v3h-3zM1029 276h3v3h-3zM1030 290h3v3h-3zM1031 253h3v3h-3zM1032 247h3v3h-3zM1032 257h3v3h-3zM1034 268h3v3h-3zM1035 242h3v3h-3zM1036 262h3v3h-3zM1036 286h3v3h-3zM1037 278h3v3h-3zM1037 225h3v3h-3zM1038 172h3v3h-3zM1038 160h3v3h-3zM1039 153h3v3h-3zM1040 133h3v3h-3zM1040 167h3v3h-3zM1040 183h3v3h-3zM1041 200h3v3h-3zM1041 232h3v3h-3zM1041 238h3v3h-3zM1043 250h3v3h-3zM1043 259h3v3h-3zM1044 270h3v3h-3zM1045 240h3v3h-3zM1046 247h3v3h-3zM1048 226h3v3h-3zM1049 235h3v3h-3zM1049 255h3v3h-3zM1051 263h3v3h-3zM1051 254h3v3h-3zM1052 263h3v3h-3zM1053 272h3v3h-3zM1054 306h3v3h-3zM1100 306h3v3h-3zM1100 243h3v3h-3zM1101 243h3v3h-3zM1101 246h3v3h-3zM1103 224h3v3h-3zM1103 176h3v3h-3zM1104 147h3v3h-3zM1104 131h3v3h-3zM1105 120h3v3h-3zM1107 120h3v3h-3zM1107 135h3v3h-3zM1108 165h3v3h-3zM1108 180h3v3h-3zM1109 211h3v3h-3zM1109 242h3v3h-3zM1110 255h3v3h-3zM1110 257h3v3h-3zM1111 232h3v3h-3zM1111 179h3v3h-3zM1112 153h3v3h-3zM1113 139h3v3h-3zM1114 166h3v3h-3zM1114 181h3v3h-3zM1115 196h3v3h-3zM1116 208h3v3h-3zM1116 215h3v3h-3zM1118 187h3v3h-3zM1119 223h3v3h-3zM1119 236h3v3h-3zM1121 240h3v3h-3zM1121 251h3v3h-3zM1121 255h3v3h-3zM1122 260h3v3h-3zM1123 242h3v3h-3zM1123 223h3v3h-3zM1124 229h3v3h-3zM1125 208h3v3h-3zM1126 211h3v3h-3zM1127 218h3v3h-3zM1127 236h3v3h-3zM1127 249h3v3h-3zM1127 168h3v3h-3zM1128 142h3v3h-3zM1128 137h3v3h-3zM1129 127h3v3h-3zM1129 120h3v3h-3zM1131 120h3v3h-3zM1132 122h3v3h-3zM1132 148h3v3h-3zM1133 167h3v3h-3zM1134 190h3v3h-3zM1134 203h3v3h-3zM1134 213h3v3h-3zM1135 199h3v3h-3zM1136 159h3v3h-3zM1137 165h3v3h-3zM1137 172h3v3h-3zM1138 179h3v3h-3zM1138 198h3v3h-3zM1139 215h3v3h-3zM1140 222h3v3h-3zM1140 187h3v3h-3zM1141 162h3v3h-3zM1141 169h3v3h-3zM1142 194h3v3h-3zM1142 206h3v3h-3zM1143 211h3v3h-3zM1145 219h3v3h-3zM1145 229h3v3h-3zM1145 238h3v3h-3zM1146 252h3v3h-3zM1146 256h3v3h-3zM1146 260h3v3h-3zM1147 270h3v3h-3zM1148 279h3v3h-3zM1148 287h3v3h-3zM1150 294h3v3h-3zM1150 268h3v3h-3zM1151 282h3v3h-3zM1153 275h3v3h-3zM1153 264h3v3h-3zM1155 261h3v3h-3zM1155 268h3v3h-3zM1156 277h3v3h-3zM1158 269h3v3h-3zM1158 278h3v3h-3zM1159 281h3v3h-3zM1159 289h3v3h-3zM1159 287h3v3h-3zM1160 306h3v3h-3zM1194 306h3v3h-3zM1195 195h3v3h-3zM1195 158h3v3h-3zM1195 167h3v3h-3zM1195 178h3v3h-3zM1196 207h3v3h-3zM1196 237h3v3h-3zM1197 237h3v3h-3zM1197 245h3v3h-3zM1198 231h3v3h-3zM1199 224h3v3h-3zM1200 214h3v3h-3zM1200 230h3v3h-3zM1201 238h3v3h-3zM1201 256h3v3h-3zM1202 275h3v3h-3zM1202 277h3v3h-3zM1203 287h3v3h-3zM1203 299h3v3h-3zM1205 285h3v3h-3zM1206 293h3v3h-3zM1206 288h3v3h-3zM1207 276h3v3h-3zM1208 283h3v3h-3zM1208 259h3v3h-3zM1209 256h3v3h-3zM1209 223h3v3h-3zM1210 172h3v3h-3zM1211 161h3v3h-3zM1211 181h3v3h-3zM1212 197h3v3h-3zM1213 205h3v3h-3zM1213 217h3v3h-3zM1213 229h3v3h-3zM1214 253h3v3h-3zM1215 247h3v3h-3zM1215 266h3v3h-3zM1216 226h3v3h-3zM1217 222h3v3h-3zM1217 200h3v3h-3zM1218 163h3v3h-3zM1218 168h3v3h-3zM1219 177h3v3h-3zM1219 202h3v3h-3zM1220 220h3v3h-3zM1221 213h3v3h-3zM1221 172h3v3h-3zM1222 166h3v3h-3zM1222 143h3v3h-3zM1223 129h3v3h-3zM1223 120h3v3h-3zM1225 120h3v3h-3zM1226 128h3v3h-3zM1226 135h3v3h-3zM1228 124h3v3h-3zM1229 161h3v3h-3zM1229 167h3v3h-3zM1229 175h3v3h-3zM1230 187h3v3h-3zM1231 190h3v3h-3zM1231 195h3v3h-3zM1232 208h3v3h-3zM1232 236h3v3h-3zM1233 248h3v3h-3zM1234 251h3v3h-3zM1234 259h3v3h-3zM1235 267h3v3h-3zM1237 275h3v3h-3zM1238 281h3v3h-3zM1239 286h3v3h-3zM1240 290h3v3h-3zM1241 298h3v3h-3zM1241 303h3v3h-3zM1242 306h3v3h-3zM1345 306h3v3h-3z"/>
<rect x="1118" y="54" width="1" height="399" fill="#b42e06"/>
<text class="tl" x="1124.5" y="440">1666</text>
</svg>
</div>
</body>
</html>
